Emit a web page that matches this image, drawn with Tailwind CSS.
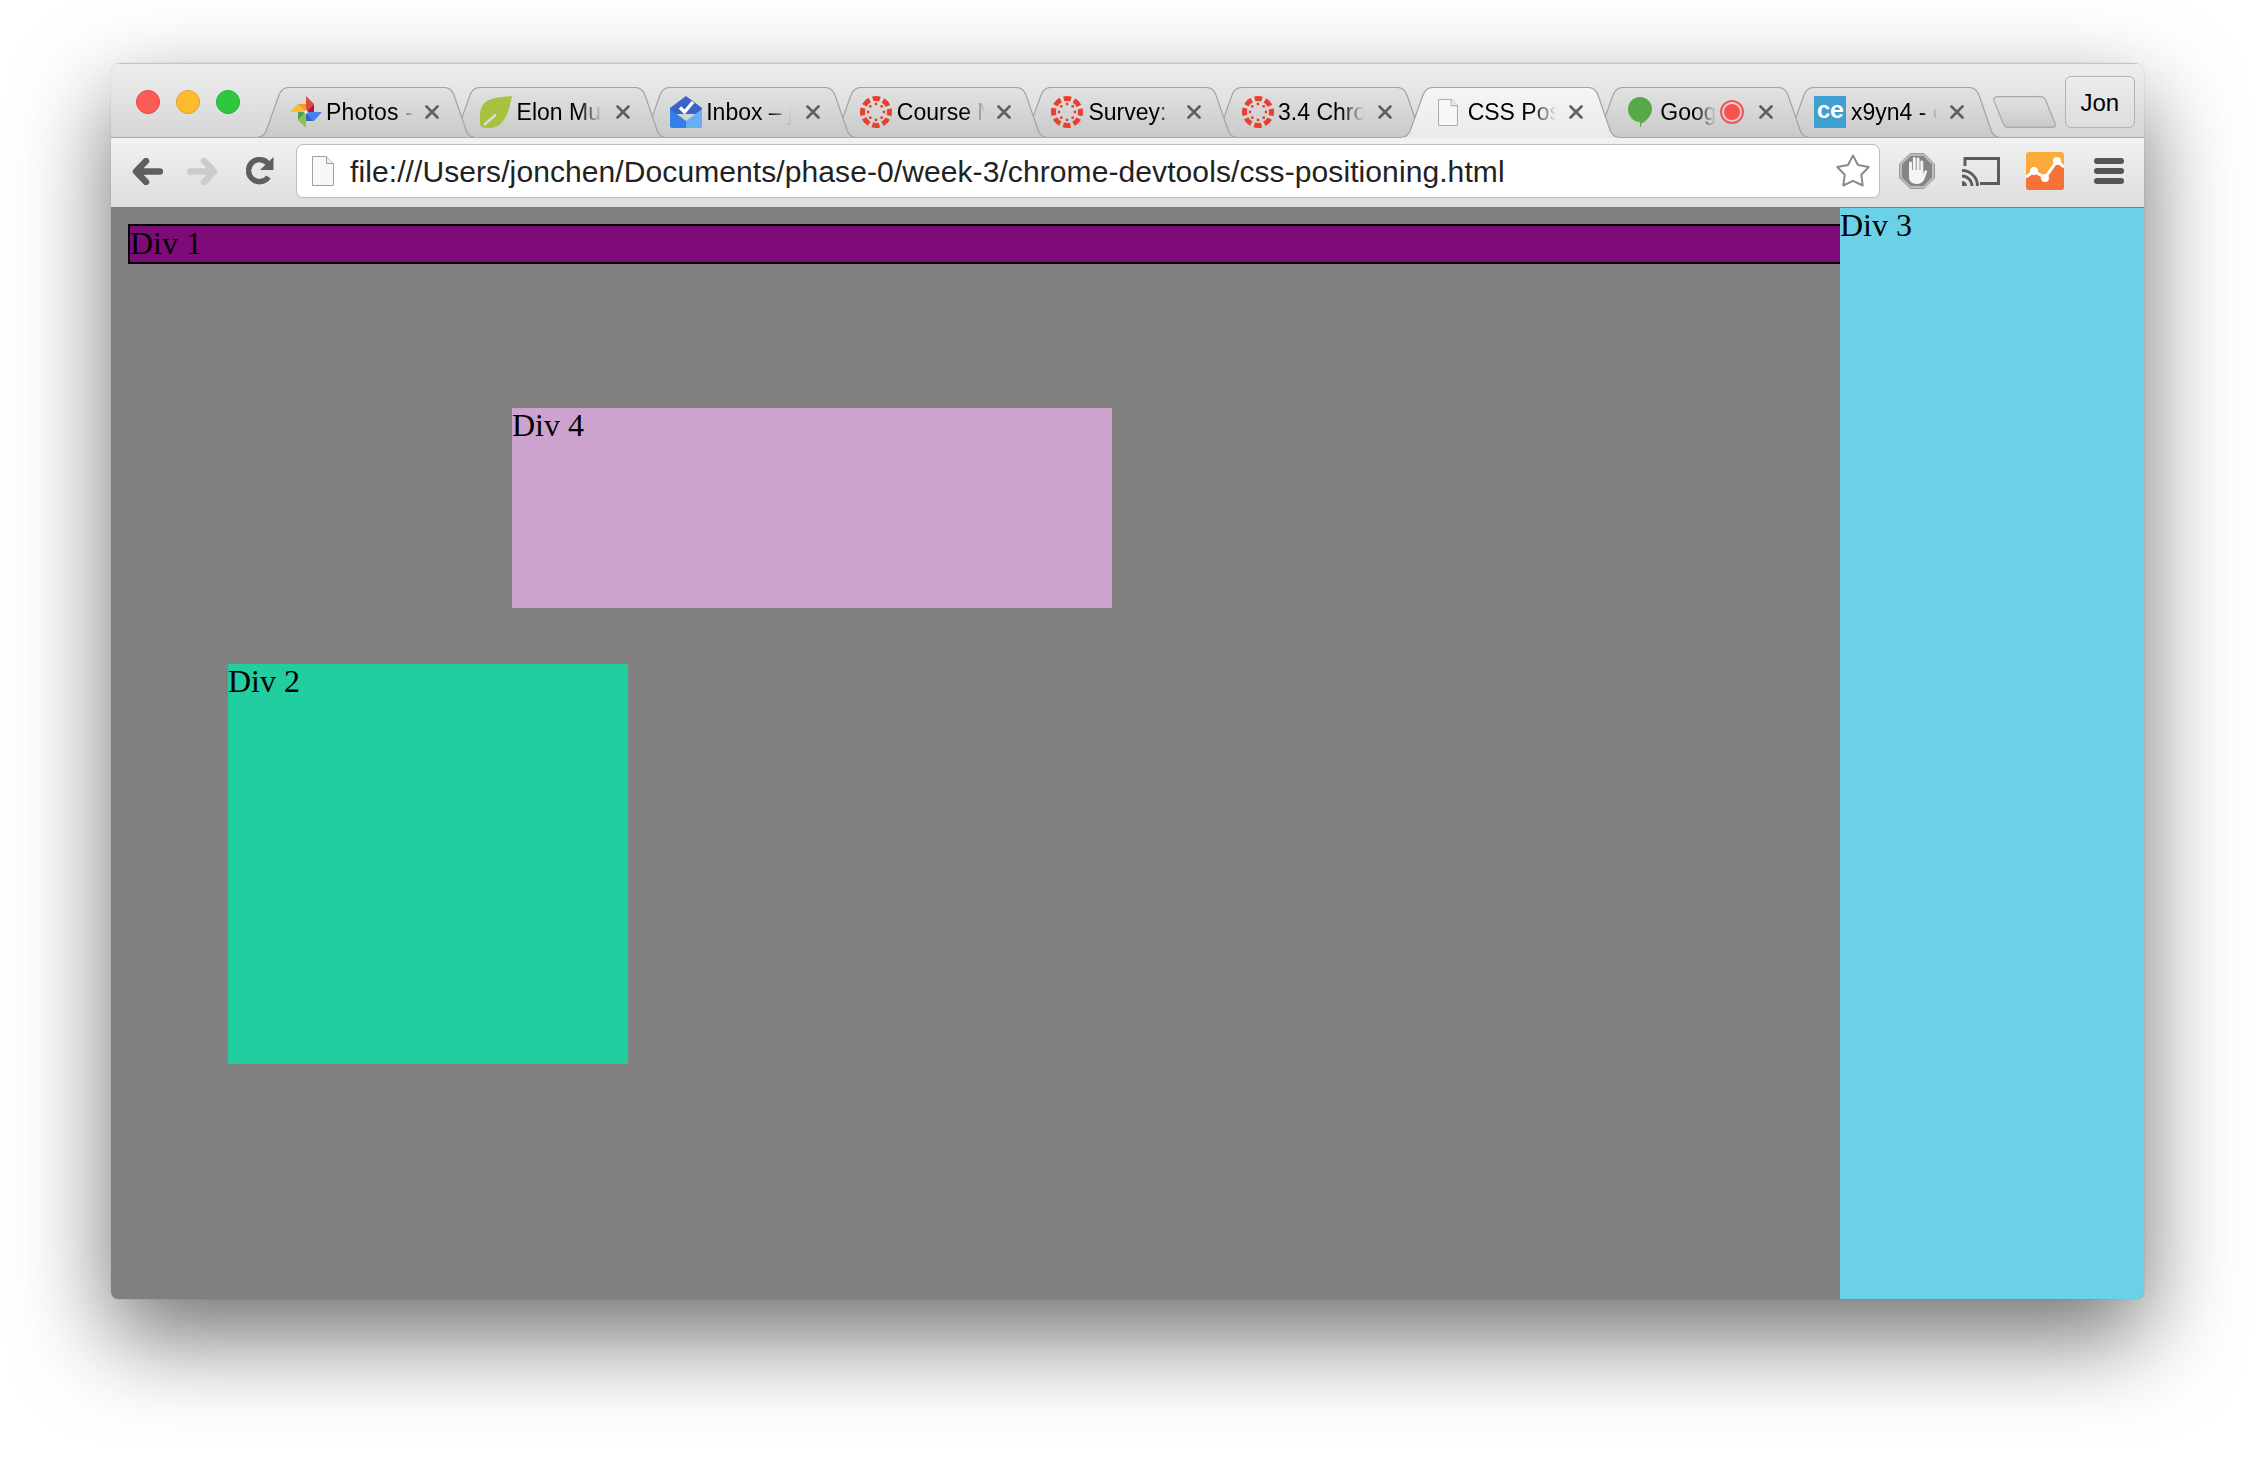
<!doctype html>
<html lang="en">
<head>
<meta charset="utf-8">
<title>CSS Positioning</title>
<script src="https://cdn.jsdelivr.net/npm/@tailwindcss/browser@4"></script>
</head>
<body class="bg-white w-[2256px] h-[1458px] overflow-hidden font-['Liberation_Sans',Arial,sans-serif]">
<svg class="absolute w-0 h-0" aria-hidden="true">
  <defs>
    <linearGradient id="gi" x1="0" y1="0" x2="0" y2="1"><stop offset="0" stop-color="#e2e2e2"/><stop offset="1" stop-color="#c9c9c9"/></linearGradient>
    <linearGradient id="ga" x1="0" y1="0" x2="0" y2="1"><stop offset="0" stop-color="#f5f5f5"/><stop offset="1" stop-color="#eaeaea"/></linearGradient>
    <linearGradient id="gan" x1="0" y1="0" x2="0" y2="1"><stop offset="0" stop-color="#fbae3b"/><stop offset="1" stop-color="#f8a03a"/></linearGradient>
    <symbol id="tab" viewBox="0 0 216 50" overflow="visible">
      <path fill="url(#gi)" d="M0 50C5 50 7 47 8.500 43L21 8C23 3 26 .5 31 .5H186C191 .5 194 3 196 8L208 43C209.500 47 212 50 216 50Z"/>
      <path fill="none" stroke="#a3a3a3" stroke-width="1.200" d="M0 50C5 50 7 47 8.500 43L21 8C23 3 26 .5 31 .5H186C191 .5 194 3 196 8L208 43C209.500 47 212 50 216 50"/>
    </symbol>
    <symbol id="tab-active" viewBox="0 0 216 51" overflow="visible">
      <path fill="url(#ga)" d="M0 50C5 50 7 47 8.500 43L21 8C23 3 26 .5 31 .5H186C191 .5 194 3 196 8L208 43C209.500 47 212 50 216 50V51H0Z"/>
      <path fill="none" stroke="#a3a3a3" stroke-width="1.200" d="M0 50C5 50 7 47 8.500 43L21 8C23 3 26 .5 31 .5H186C191 .5 194 3 196 8L208 43C209.500 47 212 50 216 50"/>
    </symbol>
    <symbol id="canvas" viewBox="0 0 32 32">
      <circle cx="16" cy="16" r="13.500" fill="none" stroke="#e8402f" stroke-width="5" stroke-dasharray="7.400 3.200" stroke-dashoffset="3.700"/>
      <g fill="#e8402f">
        <circle cx="24" cy="16" r="1.400"/><circle cx="8" cy="16" r="1.400"/><circle cx="16" cy="24" r="1.400"/><circle cx="16" cy="8" r="1.400"/>
        <circle cx="21.700" cy="21.700" r="1.400"/><circle cx="10.300" cy="21.700" r="1.400"/><circle cx="21.700" cy="10.300" r="1.400"/><circle cx="10.300" cy="10.300" r="1.400"/>
      </g>
    </symbol>
    <symbol id="close" viewBox="0 0 14 14">
      <path d="M1.500 1.500L12.500 12.500M12.500 1.500L1.500 12.500" stroke="#5f5f5f" stroke-width="2.600" stroke-linecap="round" fill="none"/>
    </symbol>
    <symbol id="doc" viewBox="0 0 22 30">
      <path d="M.5.500H14.500L21.500 7.500V29.500H.5Z" fill="#f8f8f8" stroke="#a0a0a0"/>
      <path d="M14.500.5V7.500H21.500" fill="#ececec" stroke="#a0a0a0"/>
    </symbol>
  </defs>
</svg>

<div class="ml-[111px] mt-[63px] w-[2033px] h-[1236px] flex flex-col rounded-t-[10px] rounded-b-[7px] overflow-hidden shadow-[0_38px_94px_0_rgba(0,0,0,0.56),0_0_1px_rgba(0,0,0,0.4)]">

  <!-- Tab strip -->
  <div class="h-[74px] shrink-0 flex items-start bg-linear-to-b from-[#eeeeee] to-[#d6d6d6] border-t border-[#c4c4c4]">
    <div class="w-[147px] shrink-0 mt-[26px] pl-[25px] flex gap-[16px]">
      <span class="size-[24px] rounded-full bg-[#fc5b57] border border-[#e5443f]"></span>
      <span class="size-[24px] rounded-full bg-[#fdbc2f] border border-[#e0a028]"></span>
      <span class="size-[24px] rounded-full bg-[#2dc840] border border-[#25ad35]"></span>
    </div>

    <div class="flex mt-[23px] shrink-0">
      <!-- Photos -->
      <div class="relative z-[9] w-[216px] h-[50px] -mr-[25.4px] flex items-center shrink-0">
        <svg class="absolute inset-0 w-[216px] h-[50px]"><use href="#tab"/></svg>
        <svg class="relative ml-[32px] size-[32px] shrink-0" viewBox="-16 -16 32 32">
          <path fill="#dd4b3a" d="M0-16L8-8L0 0Z"/><path fill="#a9174f" d="M8-8V0H0Z"/>
          <path fill="#4285f0" d="M0 0H16L8 9Z"/><path fill="#3367c9" d="M0 0L8 9H0Z"/>
          <path fill="#8bc34a" d="M0 0V16L-8 8Z"/><path fill="#4c9e5a" d="M0 0L-8 8V0Z"/>
          <path fill="#fbbc2d" d="M0 0H-16L-8-8Z"/><path fill="#f79a1f" d="M0 0L-8-8H0Z"/>
          <path fill="#fff" d="M0-3L.8-.8L3 0L.8.8L0 3L-.8.8L-3 0L-.8-.8Z"/>
        </svg>
        <span class="relative ml-[4px] w-[88px] overflow-hidden whitespace-nowrap text-[23px] leading-[28px] tracking-[0.2px] text-black [mask-image:linear-gradient(to_right,#000_80%,transparent_100%)]">Photos -</span>
        <svg class="absolute left-[167px] top-[18px] size-[14px]"><use href="#close"/></svg>
      </div>
      <!-- Leaf -->
      <div class="relative z-[8] w-[216px] h-[50px] -mr-[25.4px] flex items-center shrink-0">
        <svg class="absolute inset-0 w-[216px] h-[50px]"><use href="#tab"/></svg>
        <svg class="relative ml-[31px] size-[32px] shrink-0" viewBox="0 0 32 32">
          <path fill="#a6c23f" d="M32 0C22 1 7 1 2 10C-1 17 -1 26 1 31C4 32 8 32 11 32C25 31 29 15 32 0Z"/>
          <path d="M4 29L16 18.500" stroke="#dcdcdc" stroke-width="2.400" fill="none"/>
        </svg>
        <span class="relative ml-[5px] w-[87px] overflow-hidden whitespace-nowrap text-[23px] leading-[28px] text-black [mask-image:linear-gradient(to_right,#000_72%,transparent_98%)]">Elon Mu</span>
        <svg class="absolute left-[167px] top-[18px] size-[14px]"><use href="#close"/></svg>
      </div>
      <!-- Inbox -->
      <div class="relative z-[7] w-[216px] h-[50px] -mr-[25.4px] flex items-center shrink-0">
        <svg class="absolute inset-0 w-[216px] h-[50px]"><use href="#tab"/></svg>
        <svg class="relative ml-[31px] size-[32px] shrink-0" viewBox="0 0 32 32">
          <path fill="#3b64c9" d="M16 0L32 12V18H0V12Z"/>
          <path fill="#2f80e8" d="M0 13L16 25V32H2Q0 32 0 30Z"/>
          <path fill="#69adf7" d="M32 13L16 25V32H30Q32 32 32 30Z"/>
          <path d="M10 11.500L14.500 16L23 6" stroke="#fff" stroke-width="3.400" fill="none"/>
        </svg>
        <span class="relative ml-[4px] w-[87px] overflow-hidden whitespace-nowrap text-[23px] leading-[28px] text-black [mask-image:linear-gradient(to_right,#000_72%,transparent_98%)]">Inbox – j</span>
        <svg class="absolute left-[167px] top-[18px] size-[14px]"><use href="#close"/></svg>
      </div>
      <!-- Course -->
      <div class="relative z-[6] w-[216px] h-[50px] -mr-[25.4px] flex items-center shrink-0">
        <svg class="absolute inset-0 w-[216px] h-[50px]"><use href="#tab"/></svg>
        <svg class="relative ml-[30px] size-[32px] shrink-0"><use href="#canvas"/></svg>
        <span class="relative ml-[5px] w-[88px] overflow-hidden whitespace-nowrap text-[23px] leading-[28px] text-black [mask-image:linear-gradient(to_right,#000_78%,transparent_100%)]">Course M</span>
        <svg class="absolute left-[167px] top-[18px] size-[14px]"><use href="#close"/></svg>
      </div>
      <!-- Survey -->
      <div class="relative z-[5] w-[216px] h-[50px] -mr-[25.4px] flex items-center shrink-0">
        <svg class="absolute inset-0 w-[216px] h-[50px]"><use href="#tab"/></svg>
        <svg class="relative ml-[31px] size-[32px] shrink-0"><use href="#canvas"/></svg>
        <span class="relative ml-[5px] w-[88px] overflow-hidden whitespace-nowrap text-[23px] leading-[28px] text-black [mask-image:linear-gradient(to_right,#000_78%,transparent_100%)]">Survey:</span>
        <svg class="absolute left-[167px] top-[18px] size-[14px]"><use href="#close"/></svg>
      </div>
      <!-- 3.4 -->
      <div class="relative z-[4] w-[216px] h-[50px] -mr-[25.4px] flex items-center shrink-0">
        <svg class="absolute inset-0 w-[216px] h-[50px]"><use href="#tab"/></svg>
        <svg class="relative ml-[31px] size-[32px] shrink-0"><use href="#canvas"/></svg>
        <span class="relative ml-[4px] w-[88px] overflow-hidden whitespace-nowrap text-[23px] leading-[28px] text-black [mask-image:linear-gradient(to_right,#000_72%,transparent_98%)]">3.4 Chro</span>
        <svg class="absolute left-[167px] top-[18px] size-[14px]"><use href="#close"/></svg>
      </div>
      <!-- Active -->
      <div class="relative z-[10] w-[216px] h-[50px] -mr-[25.4px] flex items-center shrink-0">
        <svg class="absolute inset-0 w-[216px] h-[51px]"><use href="#tab-active"/></svg>
        <svg class="relative ml-[35px] mt-[1px] w-[22px] h-[27px] shrink-0"><use href="#doc"/></svg>
        <span class="relative ml-[9px] w-[90px] overflow-hidden whitespace-nowrap text-[23px] leading-[28px] text-black [mask-image:linear-gradient(to_right,#000_72%,transparent_98%)]">CSS Pos</span>
        <svg class="absolute left-[167px] top-[18px] size-[14px]"><use href="#close"/></svg>
      </div>
      <!-- Hangouts -->
      <div class="relative z-[2] w-[216px] h-[50px] -mr-[25.4px] flex items-center shrink-0">
        <svg class="absolute inset-0 w-[216px] h-[50px]"><use href="#tab"/></svg>
        <svg class="relative ml-[36px] w-[24px] h-[30px] shrink-0" viewBox="0 0 24 30">
          <path fill="#57a846" d="M12 0A12 12 0 0 1 24 12C24 19 18 24 13 27V30H12V25A12.500 12.500 0 0 1 0 12A12 12 0 0 1 12 0Z"/>
        </svg>
        <span class="relative ml-[8px] w-[56px] overflow-hidden whitespace-nowrap text-[23px] leading-[28px] text-black [mask-image:linear-gradient(to_right,#000_62%,transparent_100%)]">Goog</span>
        <svg class="absolute left-[128px] top-[13px] size-[24px]" viewBox="0 0 24 24">
          <circle cx="12" cy="12" r="11" fill="none" stroke="#f5555a" stroke-width="2"/><circle cx="12" cy="12" r="8" fill="#fa5050"/>
        </svg>
        <svg class="absolute left-[167px] top-[18px] size-[14px]"><use href="#close"/></svg>
      </div>
      <!-- CE -->
      <div class="relative z-[1] w-[216px] h-[50px] -mr-[25.4px] flex items-center shrink-0">
        <svg class="absolute inset-0 w-[216px] h-[50px]"><use href="#tab"/></svg>
        <span class="relative ml-[31px] size-[32px] shrink-0 bg-[#3f9fd1] text-white font-['Liberation_Mono',monospace] font-bold text-[24px] leading-[28px] tracking-[-1px] flex items-center justify-center">ce</span>
        <span class="relative ml-[5px] w-[88px] overflow-hidden whitespace-nowrap text-[23px] leading-[28px] text-black [mask-image:linear-gradient(to_right,#000_80%,transparent_98%)]">x9yn4 - c</span>
        <svg class="absolute left-[167px] top-[18px] size-[14px]"><use href="#close"/></svg>
      </div>
    </div>

    <svg class="ml-[19.4px] mt-[32px] w-[63px] h-[32px] shrink-0" viewBox="0 0 63 32">
      <path fill="url(#gi)" stroke="#a8a8a8" stroke-width="1.200" d="M6 .6H47C50 .6 52 2 53 5L62 27C63 30 62 31.400 59 31.400H16C13 31.400 11 30 10 27L1 5C.2 2 2 .6 6 .6Z"/>
    </svg>
    <div class="ml-[9px] mt-[12px] w-[70px] h-[52px] shrink-0 flex items-center justify-center pt-[2px] rounded-[6px] border border-[#b4b4b4] bg-linear-to-b from-[#ececec] to-[#dedede] text-[24px] text-black">Jon</div>
  </div>

  <!-- Toolbar -->
  <div class="relative z-[0] h-[70px] shrink-0 flex items-center pb-[3px] pl-[21px] border-t border-[#a8a8a8] bg-linear-to-b from-[#f2f2f2] to-[#dddddd]">
    <svg class="w-[31px] h-[27px] shrink-0" viewBox="0 0 31 27"><path d="M28 13.500H5M14 3L4 13.500L14 24" stroke="#5f5f5f" stroke-width="6.500" stroke-linecap="round" stroke-linejoin="round" fill="none"/></svg>
    <svg class="ml-[24px] w-[31px] h-[27px] shrink-0" viewBox="0 0 31 27"><path d="M3 13.500H26M17 3L27 13.500L17 24" stroke="#cbcbcb" stroke-width="6.500" stroke-linecap="round" stroke-linejoin="round" fill="none"/></svg>
    <svg class="ml-[28px] w-[28px] h-[28px] shrink-0" viewBox="0 0 28 28">
      <path d="M23.500 9A11 11 0 1 0 22.500 20" stroke="#5f5f5f" stroke-width="5.500" fill="none"/>
      <path d="M27.500 0V13H14Z" fill="#5f5f5f"/>
    </svg>
    <div class="ml-[22px] w-[1584px] h-[54px] shrink-0 flex items-center pl-[15px] pr-[8px] bg-white rounded-[7px] border border-[#bdbdbd]">
      <svg class="w-[22px] h-[30px] shrink-0"><use href="#doc"/></svg>
      <span class="ml-[16px] pt-[1px] text-[30px] leading-[36px] tracking-[0.09px] text-[#222222] whitespace-nowrap">file:///Users/jonchen/Documents/phase-0/week-3/chrome-devtools/css-positioning.html</span>
      <svg class="ml-auto mt-[1px] w-[36px] h-[36px] shrink-0" viewBox="0 0 36 36">
        <path d="M18 1.500L23 11L33.700 13L26.300 20.800L27.700 31.500L18 26.800L8.300 31.500L9.700 20.800L2.300 13L13 11Z" fill="#fff" stroke="#8a8a8a" stroke-width="2" stroke-linejoin="round"/>
      </svg>
    </div>
    <svg class="ml-[19px] w-[36px] h-[36px] shrink-0" viewBox="0 0 36 36">
      <path d="M11 .5H25L35.500 11V25L25 35.500H11L.5 25V11Z" fill="#bdbdbd" stroke="#9a9a9a"/>
      <path d="M11.500 3H24.500L33 11.500V24.500L24.500 33H11.500L3 24.500V11.500Z" fill="#858585"/>
      <path d="M11.500 19V10M15.300 18V5.500M19.100 18V6M22.800 20V9" stroke="#f4f4f4" stroke-width="2.900" stroke-linecap="round" fill="none"/>
      <path d="M10 17H24.200V21.500L25.500 18.500C26.500 16.500 28.500 17 28 19L25.500 26C24 29.500 21.500 31 17.500 31C13 31 10 28 10 24Z" fill="#f4f4f4"/>
    </svg>
    <svg class="ml-[27px] w-[38px] h-[29px] shrink-0" viewBox="0 0 38 29">
      <path d="M3 9V1.500H36.500V26.500H18" fill="none" stroke="#5d5d5d" stroke-width="3"/>
      <path d="M0 13.500A15.500 15.500 0 0 1 15.500 29M0 19A10 10 0 0 1 10 29" fill="none" stroke="#5d5d5d" stroke-width="2.800"/>
      <path d="M0 24A5 5 0 0 1 5 29H0Z" fill="#5d5d5d"/>
    </svg>
    <svg class="ml-[26px] w-[38px] h-[38px] shrink-0" viewBox="0 0 38 38">
      <rect width="38" height="38" rx="3" fill="url(#gan)"/>
      <path d="M0 25L8 19L19 26L31 9L38 15V35Q38 38 35 38H3Q0 38 0 35Z" fill="#f67238"/>
      <path d="M0 25L8 19L19 26L31 9L38 15" fill="none" stroke="#fff" stroke-width="3"/>
      <circle cx="8" cy="19" r="4" fill="#fff"/><circle cx="19" cy="26" r="4" fill="#fff"/><circle cx="31" cy="9" r="4" fill="#fff"/>
    </svg>
    <div class="ml-[30px] w-[30px] shrink-0 flex flex-col gap-[4px]">
      <span class="h-[6px] rounded-full bg-[#555555]"></span>
      <span class="h-[6px] rounded-full bg-[#555555]"></span>
      <span class="h-[6px] rounded-full bg-[#555555]"></span>
    </div>
  </div>

  <!-- Page canvas -->
  <div class="relative flex-1 bg-[#808080] font-['Liberation_Serif',serif] text-[32px] leading-[34px] text-black">
    <div class="absolute left-[17px] top-[17px] w-[1740px] h-[40px] bg-[#7f0b78] border-2 border-black">Div 1</div>
    <div class="absolute left-[401px] top-[201px] w-[600px] h-[200px] bg-[#cca3cd]">Div 4</div>
    <div class="absolute left-[117px] top-[457px] w-[400px] h-[400px] bg-[#22cda0]">Div 2</div>
    <div class="absolute left-[1729px] top-[1px] bottom-0 w-[304px] bg-[#6bd1e6]">Div 3</div>
  </div>
</div>
</body>
</html>
